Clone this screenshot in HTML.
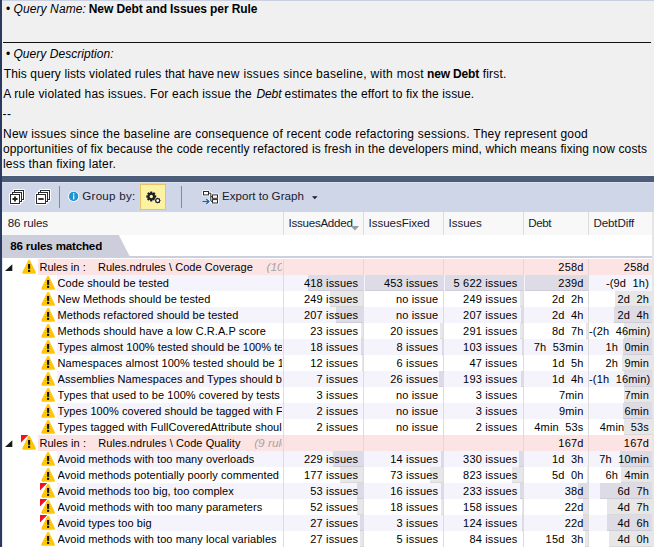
<!DOCTYPE html>
<html><head><meta charset="utf-8"><title>New Debt and Issues per Rule</title>
<style>
html,body{margin:0;padding:0}
body{width:654px;height:547px;position:relative;overflow:hidden;background:#fff;font-family:"Liberation Sans",sans-serif;font-size:12px;color:#000}
div,svg,span{position:absolute;box-sizing:border-box}
.t{white-space:pre;font-size:12px;line-height:14px;height:14px;color:#000}
.ui{white-space:pre;font-size:11.6px;line-height:14px;color:#1a1a2e}
.rbg{height:16px}
.nm{height:16px;line-height:16px;white-space:pre;overflow:hidden;font-size:11px;letter-spacing:0.065px;color:#000}
.nm .sp{position:static;display:inline-block;width:12.2px}
.nm .ex{position:static;color:#a3a3a3;font-style:italic;margin-left:13.7px;font-size:11.8px;letter-spacing:0}
.cv{height:16px;line-height:16px;white-space:pre;text-align:right;font-size:11px;letter-spacing:0.17px;color:#000}
.bar{height:16px}
.vsep{width:1px;background:#dcdcdc}
</style></head><body>
<!-- top description panel -->
<div style="left:0;top:0;width:654px;height:176px;background:#f0f0f0"></div>
<div style="left:0;top:0;width:654px;height:1px;background:#c9d0e1"></div>
<div style="left:0;top:175px;width:654px;height:1px;background:#f6f6f6"></div>
<div style="left:3px;top:42px;width:648px;height:1px;background:#111"></div>
<div class="t" style="left:6.0px;top:2px;letter-spacing:0.0px;">•</div>
<div class="t" style="left:13.5px;top:2px;letter-spacing:0.1px;font-style:italic">Query Name:</div>
<div class="t" style="left:88.8px;top:2px;letter-spacing:-0.104px;font-weight:bold">New Debt and Issues per Rule</div>
<div class="t" style="left:6.0px;top:47px;letter-spacing:0.0px;">•</div>
<div class="t" style="left:13.5px;top:47px;letter-spacing:0.035px;font-style:italic">Query Description:</div>
<div class="t" style="left:3.8px;top:67px;letter-spacing:0.113px;">This query lists violated rules</div>
<div class="t" style="left:165.0px;top:67px;letter-spacing:-0.025px;">that have</div>
<div class="t" style="left:216.8px;top:67px;letter-spacing:0.333px;">new issues since</div>
<div class="t" style="left:316.0px;top:67px;letter-spacing:0.311px;">baseline, with most</div>
<div class="t" style="left:427.0px;top:67px;letter-spacing:-0.171px;font-weight:bold">new Debt</div>
<div class="t" style="left:482.8px;top:67px;letter-spacing:0.16px;">first.</div>
<div class="t" style="left:3.2px;top:87px;letter-spacing:0.169px;">A rule violated has issues.</div>
<div class="t" style="left:150.0px;top:87px;letter-spacing:0.176px;">For each issue the</div>
<div class="t" style="left:256.4px;top:87px;letter-spacing:-0.067px;font-style:italic">Debt</div>
<div class="t" style="left:284.6px;top:87px;letter-spacing:0.119px;">estimates the effort to fix the issue.</div>
<div class="t" style="left:2.5px;top:107px;letter-spacing:0.4px;">--</div>
<div class="t" style="left:3.0px;top:127px;letter-spacing:0.218px;">New issues since the baseline are consequence of recent code refactoring sessions. They represent good</div>
<div class="t" style="left:3.0px;top:142px;letter-spacing:0.127px;">opportunities of fix because the code recently refactored is fresh in the developers mind, which means fixing now costs</div>
<div class="t" style="left:3.0px;top:157px;letter-spacing:0.182px;">less than fixing later.</div>
<!-- dark band -->
<div style="left:0;top:176px;width:654px;height:6px;background:#4b5c78"></div>
<!-- toolbar -->
<div style="left:0;top:182px;width:654px;height:30px;background:#cfd6e7"></div>
<div style="left:0;top:182px;width:654px;height:1px;background:#dde2ef"></div>
<!-- header -->
<div style="left:0;top:212px;width:654px;height:23px;background:#f8f8f8"></div>
<div class="vsep" style="left:283px;top:212px;height:23px"></div><div class="vsep" style="left:363px;top:212px;height:23px"></div><div class="vsep" style="left:443px;top:212px;height:23px"></div><div class="vsep" style="left:523px;top:212px;height:23px"></div><div class="vsep" style="left:588px;top:212px;height:23px"></div>
<!-- tab -->
<svg style="left:0;top:235px" width="140" height="22" viewBox="0 0 140 22"><path d="M0 0 L118.8 0 L129.8 21.5 L129.8 22 L0 22 Z" fill="#cdcedb"/></svg>
<div style="left:0;top:256px;width:654px;height:2px;background:#cdcfdc"></div>
<div class="ui" style="left:7.8px;top:216px;letter-spacing:-0.143px;">86 rules</div>
<div class="ui" style="left:288.6px;top:216px;letter-spacing:-0.28px;">IssuesAdded</div>
<div class="ui" style="left:368.5px;top:216px;letter-spacing:-0.06px;">IssuesFixed</div>
<div class="ui" style="left:448.5px;top:216px;letter-spacing:-0.04px;">Issues</div>
<div class="ui" style="left:528.3px;top:216px;letter-spacing:-0.467px;">Debt</div>
<div class="ui" style="left:593.4px;top:216px;letter-spacing:-0.114px;">DebtDiff</div>
<div class="ui" style="left:82.3px;top:189.4px;letter-spacing:0.25px;">Group by:</div>
<div class="ui" style="left:222.0px;top:189.4px;letter-spacing:0.0px;">Export to Graph</div>
<div class="ui" style="left:10.3px;top:239px;letter-spacing:-0.187px;font-weight:bold;color:#000">86 rules matched</div>

<!-- expand all -->
<svg style="left:6px;top:186px" width="22" height="22" viewBox="0 0 22 22">
 <g fill="#fff" stroke="#fff" stroke-width="3" stroke-linejoin="round"><rect x="8.5" y="4.5" width="9" height="9"/><rect x="6.5" y="6.5" width="9" height="9"/><rect x="4.5" y="8.5" width="9" height="9"/></g>
 <g fill="#fff" stroke="#2b2b2b" stroke-width="1"><rect x="8.5" y="4.5" width="9" height="9"/><rect x="6.5" y="6.5" width="9" height="9"/><rect x="4.5" y="8.5" width="9" height="9"/></g>
 <path d="M6.5 13 H11.5 M9 10.5 V15.5" stroke="#222" stroke-width="1.8" fill="none"/>
</svg>
<!-- collapse all -->
<svg style="left:32px;top:186px" width="22" height="22" viewBox="0 0 22 22">
 <g fill="#fff" stroke="#fff" stroke-width="3" stroke-linejoin="round"><rect x="8.5" y="4.5" width="9" height="9"/><rect x="6.5" y="6.5" width="9" height="9"/><rect x="4.5" y="8.5" width="9" height="9"/></g>
 <g fill="#fff" stroke="#2b2b2b" stroke-width="1"><rect x="8.5" y="4.5" width="9" height="9"/><rect x="6.5" y="6.5" width="9" height="9"/><rect x="4.5" y="8.5" width="9" height="9"/></g>
 <path d="M6.3 13 H11.7" stroke="#222" stroke-width="1.8" fill="none"/>
</svg>
<div style="left:59px;top:186px;width:1px;height:22px;background:#7f8aa3"></div>
<!-- info -->
<svg style="left:66px;top:189px" width="16" height="16" viewBox="0 0 16 16">
 <circle cx="7.6" cy="7.4" r="5.5" fill="#fff"/><circle cx="7.6" cy="7.4" r="4.7" fill="#1b95d6"/>
 <rect x="7" y="4.2" width="1.3" height="1.4" fill="#fff"/><rect x="7" y="6.4" width="1.3" height="4" fill="#fff"/>
</svg>
<!-- gear button -->
<div style="left:140px;top:184px;width:26px;height:26px;background:#fdf1a2;border:1px solid #e6c566"></div>
<svg style="left:143px;top:188px" width="22" height="18" viewBox="0 0 22 18">
 <g transform="translate(8.3,8.5)">
  <g fill="#fffbe0" opacity="0.9"><circle r="4.9"/></g>
  <g fill="#1e1e1e">
   <circle r="3.5"/>
   <g id="teeth"><rect x="-1.25" y="-5" width="2.4" height="10" rx="0.4"/><rect x="-1.25" y="-5" width="2.4" height="10" rx="0.4" transform="rotate(45)"/><rect x="-1.25" y="-5" width="2.4" height="10" rx="0.4" transform="rotate(90)"/><rect x="-1.25" y="-5" width="2.4" height="10" rx="0.4" transform="rotate(135)"/></g>
  </g>
  <circle r="1.7" fill="#fdf1a2"/>
 </g>
 <g transform="translate(14.7,12.6)">
  <circle r="3.2" fill="#fffbe0"/>
  <circle r="1.9" fill="none" stroke="#1e1e1e" stroke-width="1.2"/>
  <g stroke="#1e1e1e" stroke-width="1"><path d="M0 -2.8 V2.8 M-2.8 0 H2.8"/><path d="M0 -2.8 V2.8 M-2.8 0 H2.8" transform="rotate(45)"/></g>
  <circle r="1.35" fill="#fff"/>
 </g>
</svg>
<div style="left:181px;top:186px;width:1px;height:22px;background:#7f8aa3"></div>
<!-- export icon -->
<svg style="left:200px;top:188px" width="20" height="18" viewBox="0 0 20 18">
 <g fill="#fff" stroke="#fff" stroke-width="2.6" stroke-linejoin="round"><rect x="3.5" y="3.5" width="5" height="3.4"/><rect x="12.5" y="6.9" width="5" height="3.4"/><rect x="12.5" y="11.6" width="5" height="3.4"/></g>
 <path d="M8.5 5.2 H10.8 V13.3 H12.5 M10.8 8.6 H12.5" stroke="#fff" stroke-width="2.6" fill="none"/>
 <path d="M8.5 5.2 H10.8 V13.3 H12.5 M10.8 8.6 H12.5" stroke="#2b2b2b" stroke-width="1" fill="none"/>
 <g fill="#fff" stroke="#2b2b2b" stroke-width="1"><rect x="3.5" y="3.5" width="5" height="3.4"/><rect x="12.5" y="6.9" width="5" height="3.4"/><rect x="12.5" y="11.6" width="5" height="3.4"/></g>
 <path d="M2.4 13.5 H8.6 M6.3 11 L9 13.5 L6.3 16" stroke="#fff" stroke-width="2.8" fill="none"/>
 <path d="M2.4 13.5 H8.6 M6.3 11 L9 13.5 L6.3 16" stroke="#1c62b9" stroke-width="1.3" fill="none"/>
</svg>
<!-- dropdown arrow -->
<svg style="left:311px;top:195px" width="8" height="6" viewBox="0 0 8 6"><path d="M1 1.2 H6.6 L3.8 4.2 Z" fill="#1e1e1e"/></svg>
<!-- sort arrow -->
<svg style="left:349px;top:224.7px" width="12" height="8" viewBox="0 0 12 8"><path d="M1.6 1 H10.2 L5.9 5.6 Z" fill="#9b9b9b"/></svg>

<div class="rbg" style="left:38px;top:259px;width:614px;background:#fde4e4"></div>
<svg class="ic" style="left:4px;top:263px" width="10" height="10" viewBox="0 0 10 10"><path d="M8.3 1.2 L8.3 8.1 L1 8.1 Z" fill="#1a1a1a"/></svg>
<svg class="ic" style="left:21px;top:259px" width="17" height="16" viewBox="-1 0 17 16"><path d="M7.1 2.2 L1.5 13.55 L12.7 13.55 Z" fill="#ffc60a" stroke="#ffc60a" stroke-width="2.4" stroke-linejoin="round"/><rect x="6.05" y="5" width="2.1" height="4.8" fill="#111"/><rect x="6.05" y="10.8" width="2.1" height="2.1" fill="#111"/></svg>
<div class="nm" style="left:39.4px;top:259px;width:242.6px;letter-spacing:0.05px">Rules in :<span class="sp"></span>Rules.ndrules \ Code Coverage<i class="ex">(10</i></div>
<div class="cv" style="left:524px;top:259px;width:59.5px">258d</div>
<div class="cv" style="left:589px;top:259px;width:60px">258d</div>
<div class="rbg" style="left:57px;top:275px;width:595px;background:#f5f3fb"></div>
<svg class="ic" style="left:40px;top:275px" width="17" height="16" viewBox="-1 0 17 16"><path d="M7.1 2.2 L1.5 13.55 L12.7 13.55 Z" fill="#ffc60a" stroke="#ffc60a" stroke-width="2.4" stroke-linejoin="round"/><rect x="6.05" y="5" width="2.1" height="4.8" fill="#111"/><rect x="6.05" y="10.8" width="2.1" height="2.1" fill="#111"/></svg>
<div class="nm" style="left:57.6px;top:275px;width:224.4px">Code should be tested</div>
<div class="bar" style="left:308px;top:275px;width:55px;background:#dddbe6;border-bottom:1px solid #cfcdd8"></div>
<div class="cv" style="left:284px;top:275px;width:74.30000000000001px">418 issues</div>
<div class="bar" style="left:365px;top:275px;width:78px;background:#dddbe6;border-bottom:1px solid #cfcdd8"></div>
<div class="cv" style="left:364px;top:275px;width:74.30000000000001px">453 issues</div>
<div class="bar" style="left:445px;top:275px;width:78px;background:#dddbe6;border-bottom:1px solid #cfcdd8"></div>
<div class="cv" style="left:444px;top:275px;width:73.39999999999998px">5 622 issues</div>
<div class="bar" style="left:525px;top:275px;width:63px;background:#dddbe6;border-bottom:1px solid #cfcdd8"></div>
<div class="cv" style="left:524px;top:275px;width:59.5px">239d</div>
<div class="cv" style="left:589px;top:275px;width:60px">-(9d  1h)</div>
<div class="rbg" style="left:57px;top:291px;width:595px;background:#ffffff"></div>
<svg class="ic" style="left:40px;top:291px" width="17" height="16" viewBox="-1 0 17 16"><path d="M7.1 2.2 L1.5 13.55 L12.7 13.55 Z" fill="#ffc60a" stroke="#ffc60a" stroke-width="2.4" stroke-linejoin="round"/><rect x="6.05" y="5" width="2.1" height="4.8" fill="#111"/><rect x="6.05" y="10.8" width="2.1" height="2.1" fill="#111"/></svg>
<div class="nm" style="left:57.6px;top:291px;width:224.4px">New Methods should be tested</div>
<div class="bar" style="left:330px;top:291px;width:33px;background:#e7e7e7;border-bottom:1px solid #d9d9d9"></div>
<div class="cv" style="left:284px;top:291px;width:74.30000000000001px">249 issues</div>
<div class="cv" style="left:364px;top:291px;width:74.30000000000001px">no issue</div>
<div class="bar" style="left:520px;top:291px;width:3px;background:#e7e7e7;border-bottom:1px solid #d9d9d9"></div>
<div class="cv" style="left:444px;top:291px;width:73.39999999999998px">249 issues</div>
<div class="cv" style="left:524px;top:291px;width:59.5px">2d  2h</div>
<div class="bar" style="left:615px;top:291px;width:37px;background:#e7e7e7;border-bottom:1px solid #d9d9d9"></div>
<div class="cv" style="left:589px;top:291px;width:60px">2d  2h</div>
<div class="rbg" style="left:57px;top:307px;width:595px;background:#f5f3fb"></div>
<svg class="ic" style="left:40px;top:307px" width="17" height="16" viewBox="-1 0 17 16"><path d="M7.1 2.2 L1.5 13.55 L12.7 13.55 Z" fill="#ffc60a" stroke="#ffc60a" stroke-width="2.4" stroke-linejoin="round"/><rect x="6.05" y="5" width="2.1" height="4.8" fill="#111"/><rect x="6.05" y="10.8" width="2.1" height="2.1" fill="#111"/></svg>
<div class="nm" style="left:57.6px;top:307px;width:224.4px">Methods refactored should be tested</div>
<div class="bar" style="left:336px;top:307px;width:27px;background:#dddbe6;border-bottom:1px solid #cfcdd8"></div>
<div class="cv" style="left:284px;top:307px;width:74.30000000000001px">207 issues</div>
<div class="cv" style="left:364px;top:307px;width:74.30000000000001px">no issue</div>
<div class="bar" style="left:521px;top:307px;width:2px;background:#dddbe6;border-bottom:1px solid #cfcdd8"></div>
<div class="cv" style="left:444px;top:307px;width:73.39999999999998px">207 issues</div>
<div class="cv" style="left:524px;top:307px;width:59.5px">2d  4h</div>
<div class="bar" style="left:614px;top:307px;width:38px;background:#dddbe6;border-bottom:1px solid #cfcdd8"></div>
<div class="cv" style="left:589px;top:307px;width:60px">2d  4h</div>
<div class="rbg" style="left:57px;top:323px;width:595px;background:#ffffff"></div>
<svg class="ic" style="left:40px;top:323px" width="17" height="16" viewBox="-1 0 17 16"><path d="M7.1 2.2 L1.5 13.55 L12.7 13.55 Z" fill="#ffc60a" stroke="#ffc60a" stroke-width="2.4" stroke-linejoin="round"/><rect x="6.05" y="5" width="2.1" height="4.8" fill="#111"/><rect x="6.05" y="10.8" width="2.1" height="2.1" fill="#111"/></svg>
<div class="nm" style="left:57.6px;top:323px;width:224.4px">Methods should have a low C.R.A.P score</div>
<div class="bar" style="left:361px;top:323px;width:2px;background:#e7e7e7;border-bottom:1px solid #d9d9d9"></div>
<div class="cv" style="left:284px;top:323px;width:74.30000000000001px">23 issues</div>
<div class="bar" style="left:440px;top:323px;width:3px;background:#e7e7e7;border-bottom:1px solid #d9d9d9"></div>
<div class="cv" style="left:364px;top:323px;width:74.30000000000001px">20 issues</div>
<div class="bar" style="left:520px;top:323px;width:3px;background:#e7e7e7;border-bottom:1px solid #d9d9d9"></div>
<div class="cv" style="left:444px;top:323px;width:73.39999999999998px">291 issues</div>
<div class="bar" style="left:586px;top:323px;width:2px;background:#e7e7e7;border-bottom:1px solid #d9d9d9"></div>
<div class="cv" style="left:524px;top:323px;width:59.5px">8d  7h</div>
<div class="bar" style="left:624px;top:323px;width:28px;background:#e7e7e7;border-bottom:1px solid #d9d9d9"></div>
<div class="cv" style="left:589px;top:323px;width:60px">-(2h  46min)</div>
<div class="rbg" style="left:57px;top:339px;width:595px;background:#f5f3fb"></div>
<svg class="ic" style="left:40px;top:339px" width="17" height="16" viewBox="-1 0 17 16"><path d="M7.1 2.2 L1.5 13.55 L12.7 13.55 Z" fill="#ffc60a" stroke="#ffc60a" stroke-width="2.4" stroke-linejoin="round"/><rect x="6.05" y="5" width="2.1" height="4.8" fill="#111"/><rect x="6.05" y="10.8" width="2.1" height="2.1" fill="#111"/></svg>
<div class="nm" style="left:57.6px;top:339px;width:224.4px">Types almost 100% tested should be 100% tested</div>
<div class="bar" style="left:361px;top:339px;width:2px;background:#dddbe6;border-bottom:1px solid #cfcdd8"></div>
<div class="cv" style="left:284px;top:339px;width:74.30000000000001px">18 issues</div>
<div class="bar" style="left:442px;top:339px;width:1px;background:#dddbe6;border-bottom:1px solid #cfcdd8"></div>
<div class="cv" style="left:364px;top:339px;width:74.30000000000001px">8 issues</div>
<div class="bar" style="left:522px;top:339px;width:1px;background:#dddbe6;border-bottom:1px solid #cfcdd8"></div>
<div class="cv" style="left:444px;top:339px;width:73.39999999999998px">103 issues</div>
<div class="cv" style="left:524px;top:339px;width:59.5px">7h  53min</div>
<div class="bar" style="left:623px;top:339px;width:29px;background:#dddbe6;border-bottom:1px solid #cfcdd8"></div>
<div class="cv" style="left:589px;top:339px;width:60px">1h  0min</div>
<div class="rbg" style="left:57px;top:355px;width:595px;background:#ffffff"></div>
<svg class="ic" style="left:40px;top:355px" width="17" height="16" viewBox="-1 0 17 16"><path d="M7.1 2.2 L1.5 13.55 L12.7 13.55 Z" fill="#ffc60a" stroke="#ffc60a" stroke-width="2.4" stroke-linejoin="round"/><rect x="6.05" y="5" width="2.1" height="4.8" fill="#111"/><rect x="6.05" y="10.8" width="2.1" height="2.1" fill="#111"/></svg>
<div class="nm" style="left:57.6px;top:355px;width:224.4px">Namespaces almost 100% tested should be 100% tested</div>
<div class="bar" style="left:362px;top:355px;width:1px;background:#e7e7e7;border-bottom:1px solid #d9d9d9"></div>
<div class="cv" style="left:284px;top:355px;width:74.30000000000001px">12 issues</div>
<div class="cv" style="left:364px;top:355px;width:74.30000000000001px">6 issues</div>
<div class="cv" style="left:444px;top:355px;width:73.39999999999998px">47 issues</div>
<div class="cv" style="left:524px;top:355px;width:59.5px">1d  5h</div>
<div class="bar" style="left:622px;top:355px;width:30px;background:#e7e7e7;border-bottom:1px solid #d9d9d9"></div>
<div class="cv" style="left:589px;top:355px;width:60px">2h  9min</div>
<div class="rbg" style="left:57px;top:371px;width:595px;background:#f5f3fb"></div>
<svg class="ic" style="left:40px;top:371px" width="17" height="16" viewBox="-1 0 17 16"><path d="M7.1 2.2 L1.5 13.55 L12.7 13.55 Z" fill="#ffc60a" stroke="#ffc60a" stroke-width="2.4" stroke-linejoin="round"/><rect x="6.05" y="5" width="2.1" height="4.8" fill="#111"/><rect x="6.05" y="10.8" width="2.1" height="2.1" fill="#111"/></svg>
<div class="nm" style="left:57.6px;top:371px;width:224.4px">Assemblies Namespaces and Types should be tested</div>
<div class="cv" style="left:284px;top:371px;width:74.30000000000001px">7 issues</div>
<div class="bar" style="left:439px;top:371px;width:4px;background:#dddbe6;border-bottom:1px solid #cfcdd8"></div>
<div class="cv" style="left:364px;top:371px;width:74.30000000000001px">26 issues</div>
<div class="bar" style="left:521px;top:371px;width:2px;background:#dddbe6;border-bottom:1px solid #cfcdd8"></div>
<div class="cv" style="left:444px;top:371px;width:73.39999999999998px">193 issues</div>
<div class="cv" style="left:524px;top:371px;width:59.5px">1d  4h</div>
<div class="bar" style="left:624px;top:371px;width:28px;background:#dddbe6;border-bottom:1px solid #cfcdd8"></div>
<div class="cv" style="left:589px;top:371px;width:60px">-(1h  16min)</div>
<div class="rbg" style="left:57px;top:387px;width:595px;background:#ffffff"></div>
<svg class="ic" style="left:40px;top:387px" width="17" height="16" viewBox="-1 0 17 16"><path d="M7.1 2.2 L1.5 13.55 L12.7 13.55 Z" fill="#ffc60a" stroke="#ffc60a" stroke-width="2.4" stroke-linejoin="round"/><rect x="6.05" y="5" width="2.1" height="4.8" fill="#111"/><rect x="6.05" y="10.8" width="2.1" height="2.1" fill="#111"/></svg>
<div class="nm" style="left:57.6px;top:387px;width:224.4px">Types that used to be 100% covered by tests should</div>
<div class="cv" style="left:284px;top:387px;width:74.30000000000001px">3 issues</div>
<div class="cv" style="left:364px;top:387px;width:74.30000000000001px">no issue</div>
<div class="cv" style="left:444px;top:387px;width:73.39999999999998px">3 issues</div>
<div class="cv" style="left:524px;top:387px;width:59.5px">7min</div>
<div class="bar" style="left:624px;top:387px;width:28px;background:#e7e7e7;border-bottom:1px solid #d9d9d9"></div>
<div class="cv" style="left:589px;top:387px;width:60px">7min</div>
<div class="rbg" style="left:57px;top:403px;width:595px;background:#f5f3fb"></div>
<svg class="ic" style="left:40px;top:403px" width="17" height="16" viewBox="-1 0 17 16"><path d="M7.1 2.2 L1.5 13.55 L12.7 13.55 Z" fill="#ffc60a" stroke="#ffc60a" stroke-width="2.4" stroke-linejoin="round"/><rect x="6.05" y="5" width="2.1" height="4.8" fill="#111"/><rect x="6.05" y="10.8" width="2.1" height="2.1" fill="#111"/></svg>
<div class="nm" style="left:57.6px;top:403px;width:224.4px">Types 100% covered should be tagged with FullCovered</div>
<div class="cv" style="left:284px;top:403px;width:74.30000000000001px">2 issues</div>
<div class="cv" style="left:364px;top:403px;width:74.30000000000001px">no issue</div>
<div class="cv" style="left:444px;top:403px;width:73.39999999999998px">3 issues</div>
<div class="cv" style="left:524px;top:403px;width:59.5px">9min</div>
<div class="bar" style="left:623px;top:403px;width:29px;background:#dddbe6;border-bottom:1px solid #cfcdd8"></div>
<div class="cv" style="left:589px;top:403px;width:60px">6min</div>
<div class="rbg" style="left:57px;top:419px;width:595px;background:#ffffff"></div>
<svg class="ic" style="left:40px;top:419px" width="17" height="16" viewBox="-1 0 17 16"><path d="M7.1 2.2 L1.5 13.55 L12.7 13.55 Z" fill="#ffc60a" stroke="#ffc60a" stroke-width="2.4" stroke-linejoin="round"/><rect x="6.05" y="5" width="2.1" height="4.8" fill="#111"/><rect x="6.05" y="10.8" width="2.1" height="2.1" fill="#111"/></svg>
<div class="nm" style="left:57.6px;top:419px;width:224.4px">Types tagged with FullCoveredAttribute should be</div>
<div class="cv" style="left:284px;top:419px;width:74.30000000000001px">2 issues</div>
<div class="cv" style="left:364px;top:419px;width:74.30000000000001px">no issue</div>
<div class="cv" style="left:444px;top:419px;width:73.39999999999998px">2 issues</div>
<div class="cv" style="left:524px;top:419px;width:59.5px">4min  53s</div>
<div class="bar" style="left:624px;top:419px;width:28px;background:#e7e7e7;border-bottom:1px solid #d9d9d9"></div>
<div class="cv" style="left:589px;top:419px;width:60px">4min  53s</div>
<div class="rbg" style="left:38px;top:435px;width:614px;background:#fde4e4"></div>
<svg class="ic" style="left:4px;top:439px" width="10" height="10" viewBox="0 0 10 10"><path d="M8.3 1.2 L8.3 8.1 L1 8.1 Z" fill="#1a1a1a"/></svg>
<svg class="ic" style="left:21px;top:435px" width="17" height="16" viewBox="-1 0 17 16"><path d="M7.1 2.2 L1.5 13.55 L12.7 13.55 Z" fill="#ffc60a" stroke="#ffc60a" stroke-width="2.4" stroke-linejoin="round"/><rect x="6.05" y="5" width="2.1" height="4.8" fill="#111"/><rect x="6.05" y="10.8" width="2.1" height="2.1" fill="#111"/><path d="M-1 0 L6.3 0 L-1 7.4 Z" fill="#f5101c"/></svg>
<div class="nm" style="left:39.4px;top:435px;width:242.6px;letter-spacing:0.08px">Rules in :<span class="sp"></span>Rules.ndrules \ Code Quality<i class="ex">(9 rules</i></div>
<div class="cv" style="left:524px;top:435px;width:59.5px">167d</div>
<div class="cv" style="left:589px;top:435px;width:60px">167d</div>
<div class="rbg" style="left:57px;top:451px;width:595px;background:#f5f3fb"></div>
<svg class="ic" style="left:40px;top:451px" width="17" height="16" viewBox="-1 0 17 16"><path d="M7.1 2.2 L1.5 13.55 L12.7 13.55 Z" fill="#ffc60a" stroke="#ffc60a" stroke-width="2.4" stroke-linejoin="round"/><rect x="6.05" y="5" width="2.1" height="4.8" fill="#111"/><rect x="6.05" y="10.8" width="2.1" height="2.1" fill="#111"/></svg>
<div class="nm" style="left:57.6px;top:451px;width:224.4px">Avoid methods with too many overloads</div>
<div class="bar" style="left:333px;top:451px;width:30px;background:#dddbe6;border-bottom:1px solid #cfcdd8"></div>
<div class="cv" style="left:284px;top:451px;width:74.30000000000001px">229 issues</div>
<div class="bar" style="left:441px;top:451px;width:2px;background:#dddbe6;border-bottom:1px solid #cfcdd8"></div>
<div class="cv" style="left:364px;top:451px;width:74.30000000000001px">14 issues</div>
<div class="bar" style="left:519px;top:451px;width:4px;background:#dddbe6;border-bottom:1px solid #cfcdd8"></div>
<div class="cv" style="left:444px;top:451px;width:73.39999999999998px">330 issues</div>
<div class="cv" style="left:524px;top:451px;width:59.5px">1d  3h</div>
<div class="bar" style="left:620px;top:451px;width:32px;background:#dddbe6;border-bottom:1px solid #cfcdd8"></div>
<div class="cv" style="left:589px;top:451px;width:60px">7h  10min</div>
<div class="rbg" style="left:57px;top:467px;width:595px;background:#ffffff"></div>
<svg class="ic" style="left:40px;top:467px" width="17" height="16" viewBox="-1 0 17 16"><path d="M7.1 2.2 L1.5 13.55 L12.7 13.55 Z" fill="#ffc60a" stroke="#ffc60a" stroke-width="2.4" stroke-linejoin="round"/><rect x="6.05" y="5" width="2.1" height="4.8" fill="#111"/><rect x="6.05" y="10.8" width="2.1" height="2.1" fill="#111"/></svg>
<div class="nm" style="left:57.6px;top:467px;width:224.4px">Avoid methods potentially poorly commented</div>
<div class="bar" style="left:340px;top:467px;width:23px;background:#e7e7e7;border-bottom:1px solid #d9d9d9"></div>
<div class="cv" style="left:284px;top:467px;width:74.30000000000001px">177 issues</div>
<div class="bar" style="left:430px;top:467px;width:13px;background:#e7e7e7;border-bottom:1px solid #d9d9d9"></div>
<div class="cv" style="left:364px;top:467px;width:74.30000000000001px">73 issues</div>
<div class="bar" style="left:512px;top:467px;width:11px;background:#e7e7e7;border-bottom:1px solid #d9d9d9"></div>
<div class="cv" style="left:444px;top:467px;width:73.39999999999998px">823 issues</div>
<div class="bar" style="left:587px;top:467px;width:1px;background:#e7e7e7;border-bottom:1px solid #d9d9d9"></div>
<div class="cv" style="left:524px;top:467px;width:59.5px">5d  0h</div>
<div class="bar" style="left:621px;top:467px;width:31px;background:#e7e7e7;border-bottom:1px solid #d9d9d9"></div>
<div class="cv" style="left:589px;top:467px;width:60px">6h  4min</div>
<div class="rbg" style="left:57px;top:483px;width:595px;background:#f5f3fb"></div>
<svg class="ic" style="left:40px;top:483px" width="17" height="16" viewBox="-1 0 17 16"><path d="M7.1 2.2 L1.5 13.55 L12.7 13.55 Z" fill="#ffc60a" stroke="#ffc60a" stroke-width="2.4" stroke-linejoin="round"/><rect x="6.05" y="5" width="2.1" height="4.8" fill="#111"/><rect x="6.05" y="10.8" width="2.1" height="2.1" fill="#111"/><path d="M-1 0 L6.3 0 L-1 7.4 Z" fill="#f5101c"/></svg>
<div class="nm" style="left:57.6px;top:483px;width:224.4px">Avoid methods too big, too complex</div>
<div class="bar" style="left:357px;top:483px;width:6px;background:#dddbe6;border-bottom:1px solid #cfcdd8"></div>
<div class="cv" style="left:284px;top:483px;width:74.30000000000001px">53 issues</div>
<div class="bar" style="left:441px;top:483px;width:2px;background:#dddbe6;border-bottom:1px solid #cfcdd8"></div>
<div class="cv" style="left:364px;top:483px;width:74.30000000000001px">16 issues</div>
<div class="bar" style="left:520px;top:483px;width:3px;background:#dddbe6;border-bottom:1px solid #cfcdd8"></div>
<div class="cv" style="left:444px;top:483px;width:73.39999999999998px">233 issues</div>
<div class="bar" style="left:578px;top:483px;width:10px;background:#dddbe6;border-bottom:1px solid #cfcdd8"></div>
<div class="cv" style="left:524px;top:483px;width:59.5px">38d</div>
<div class="bar" style="left:600px;top:483px;width:52px;background:#dddbe6;border-bottom:1px solid #cfcdd8"></div>
<div class="cv" style="left:589px;top:483px;width:60px">6d  7h</div>
<div class="rbg" style="left:57px;top:499px;width:595px;background:#ffffff"></div>
<svg class="ic" style="left:40px;top:499px" width="17" height="16" viewBox="-1 0 17 16"><path d="M7.1 2.2 L1.5 13.55 L12.7 13.55 Z" fill="#ffc60a" stroke="#ffc60a" stroke-width="2.4" stroke-linejoin="round"/><rect x="6.05" y="5" width="2.1" height="4.8" fill="#111"/><rect x="6.05" y="10.8" width="2.1" height="2.1" fill="#111"/><path d="M-1 0 L6.3 0 L-1 7.4 Z" fill="#f5101c"/></svg>
<div class="nm" style="left:57.6px;top:499px;width:224.4px">Avoid methods with too many parameters</div>
<div class="bar" style="left:357px;top:499px;width:6px;background:#e7e7e7;border-bottom:1px solid #d9d9d9"></div>
<div class="cv" style="left:284px;top:499px;width:74.30000000000001px">52 issues</div>
<div class="bar" style="left:441px;top:499px;width:2px;background:#e7e7e7;border-bottom:1px solid #d9d9d9"></div>
<div class="cv" style="left:364px;top:499px;width:74.30000000000001px">18 issues</div>
<div class="bar" style="left:522px;top:499px;width:1px;background:#e7e7e7;border-bottom:1px solid #d9d9d9"></div>
<div class="cv" style="left:444px;top:499px;width:73.39999999999998px">158 issues</div>
<div class="bar" style="left:583px;top:499px;width:5px;background:#e7e7e7;border-bottom:1px solid #d9d9d9"></div>
<div class="cv" style="left:524px;top:499px;width:59.5px">22d</div>
<div class="bar" style="left:607px;top:499px;width:45px;background:#e7e7e7;border-bottom:1px solid #d9d9d9"></div>
<div class="cv" style="left:589px;top:499px;width:60px">4d  7h</div>
<div class="rbg" style="left:57px;top:515px;width:595px;background:#f5f3fb"></div>
<svg class="ic" style="left:40px;top:515px" width="17" height="16" viewBox="-1 0 17 16"><path d="M7.1 2.2 L1.5 13.55 L12.7 13.55 Z" fill="#ffc60a" stroke="#ffc60a" stroke-width="2.4" stroke-linejoin="round"/><rect x="6.05" y="5" width="2.1" height="4.8" fill="#111"/><rect x="6.05" y="10.8" width="2.1" height="2.1" fill="#111"/><path d="M-1 0 L6.3 0 L-1 7.4 Z" fill="#f5101c"/></svg>
<div class="nm" style="left:57.6px;top:515px;width:224.4px">Avoid types too big</div>
<div class="bar" style="left:360px;top:515px;width:3px;background:#dddbe6;border-bottom:1px solid #cfcdd8"></div>
<div class="cv" style="left:284px;top:515px;width:74.30000000000001px">27 issues</div>
<div class="cv" style="left:364px;top:515px;width:74.30000000000001px">3 issues</div>
<div class="bar" style="left:522px;top:515px;width:1px;background:#dddbe6;border-bottom:1px solid #cfcdd8"></div>
<div class="cv" style="left:444px;top:515px;width:73.39999999999998px">124 issues</div>
<div class="bar" style="left:583px;top:515px;width:5px;background:#dddbe6;border-bottom:1px solid #cfcdd8"></div>
<div class="cv" style="left:524px;top:515px;width:59.5px">22d</div>
<div class="bar" style="left:607px;top:515px;width:45px;background:#dddbe6;border-bottom:1px solid #cfcdd8"></div>
<div class="cv" style="left:589px;top:515px;width:60px">4d  6h</div>
<div class="rbg" style="left:57px;top:531px;width:595px;background:#ffffff"></div>
<svg class="ic" style="left:40px;top:531px" width="17" height="16" viewBox="-1 0 17 16"><path d="M7.1 2.2 L1.5 13.55 L12.7 13.55 Z" fill="#ffc60a" stroke="#ffc60a" stroke-width="2.4" stroke-linejoin="round"/><rect x="6.05" y="5" width="2.1" height="4.8" fill="#111"/><rect x="6.05" y="10.8" width="2.1" height="2.1" fill="#111"/></svg>
<div class="nm" style="left:57.6px;top:531px;width:224.4px">Avoid methods with too many local variables</div>
<div class="bar" style="left:360px;top:531px;width:3px;background:#e7e7e7;border-bottom:1px solid #d9d9d9"></div>
<div class="cv" style="left:284px;top:531px;width:74.30000000000001px">27 issues</div>
<div class="cv" style="left:364px;top:531px;width:74.30000000000001px">5 issues</div>
<div class="cv" style="left:444px;top:531px;width:73.39999999999998px">84 issues</div>
<div class="bar" style="left:585px;top:531px;width:3px;background:#e7e7e7;border-bottom:1px solid #d9d9d9"></div>
<div class="cv" style="left:524px;top:531px;width:59.5px">15d  3h</div>
<div class="bar" style="left:609px;top:531px;width:43px;background:#e7e7e7;border-bottom:1px solid #d9d9d9"></div>
<div class="cv" style="left:589px;top:531px;width:60px">4d  0h</div>
<div class="vsep" style="left:283px;top:259px;height:288px"></div>
<div class="vsep" style="left:283px;top:259px;height:16px;background:#e8d6d6"></div>
<div class="vsep" style="left:283px;top:435px;height:16px;background:#e8d6d6"></div>
<div class="vsep" style="left:363px;top:259px;height:288px"></div>
<div class="vsep" style="left:363px;top:259px;height:16px;background:#e8d6d6"></div>
<div class="vsep" style="left:363px;top:435px;height:16px;background:#e8d6d6"></div>
<div class="vsep" style="left:443px;top:259px;height:288px"></div>
<div class="vsep" style="left:443px;top:259px;height:16px;background:#e8d6d6"></div>
<div class="vsep" style="left:443px;top:435px;height:16px;background:#e8d6d6"></div>
<div class="vsep" style="left:523px;top:259px;height:288px"></div>
<div class="vsep" style="left:523px;top:259px;height:16px;background:#e8d6d6"></div>
<div class="vsep" style="left:523px;top:435px;height:16px;background:#e8d6d6"></div>
<div class="vsep" style="left:588px;top:259px;height:288px"></div>
<div class="vsep" style="left:588px;top:259px;height:16px;background:#e8d6d6"></div>
<div class="vsep" style="left:588px;top:435px;height:16px;background:#e8d6d6"></div>
<!-- frame borders -->
<div style="left:0;top:0;width:2px;height:547px;background:#2b3a5e"></div>
<div style="left:652px;top:212px;width:2px;height:335px;background:#e6e6e6"></div>
<div style="left:2px;top:258px;width:1px;height:289px;background:#e9e9ee"></div>
</body></html>
